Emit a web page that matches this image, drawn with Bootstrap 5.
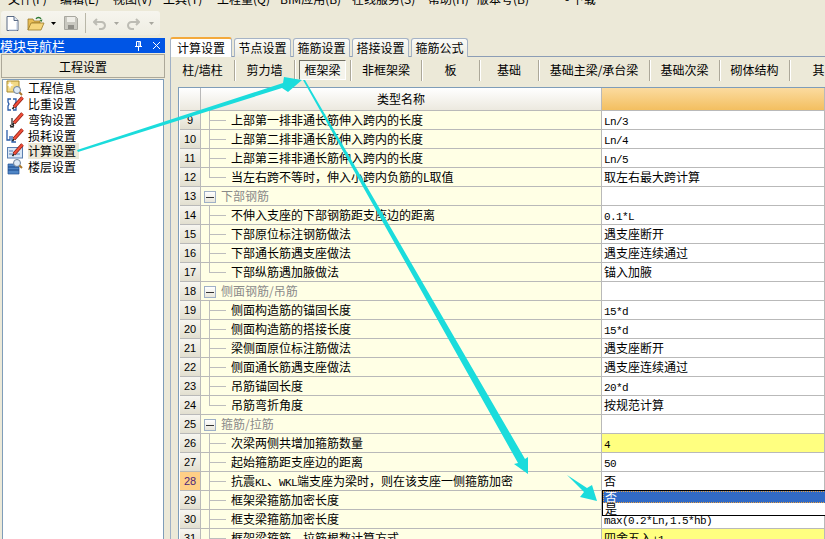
<!DOCTYPE html>
<html lang="zh-CN">
<head>
  <meta charset="UTF-8">
  <meta name="viewport" content="width=device-width, initial-scale=1.0">
  <title>计算设置</title>
  <link href="https://cdn.jsdelivr.net/npm/bootstrap@5.3.0/dist/css/bootstrap.min.css" rel="stylesheet">
  <style>
    body {
      width: 825px;
      height: 539px;
      overflow: hidden;
      position: relative;
      background-color: #ece9d8;
      color: #000;
      font-family: "Noto Sans CJK SC", "Liberation Sans", sans-serif;
      font-size: 12px;
      line-height: 18px;
    }
    .lat { font-family: "Liberation Mono", monospace; font-size: 11px; letter-spacing: -.6px; }

    /* 顶部菜单，只露出下半截 */
    .menu-strip { height: 8px; overflow: hidden; }
    .menu-strip .menu-inner { margin-top: -10px; height: 18px; white-space: nowrap; }
    .menu-item { flex: 0 0 auto; font-size: 12px; }
    .m1 { width: 60px; padding-left: 8px; }
    .m2 { width: 53px; }
    .m3 { width: 50px; }
    .m4 { width: 54px; }
    .m5 { width: 63px; }
    .m6 { width: 72px; }
    .m7 { width: 76px; }
    .m8 { width: 49px; }
    .m9 { width: 66px; }

    .tool-wrap { height: 30px; padding: 3px 0 0 1px; }
    .tool-strip {
      width: 159px;
      height: 24px;
      background: linear-gradient(#f6f5ee, #efede2);
      border-radius: 3px;
      padding-left: 5px;
    }
    .tool-sep { width: 1px; height: 20px; background: #b9b7a8; margin: 0 7px; }
    .tool-gap-s { margin-left: 6px; }
    .tool-gap-m { margin-left: 8px; }
    .tool-gap-l { margin-left: 9px; }

    .main-area { height: 501px; }
    .side-pane { width: 165px; flex: 0 0 165px; }
    .side-title {
      height: 15px;
      background: #0055e5;
      color: #fff;
      font-size: 13px;
      line-height: 15px;
      padding-right: 4px;
    }
    .title-btns { gap: 9px; }
    .side-btn {
      height: 24px;
      line-height: 19px;
      margin: 1px 0 0 1px;
      border: 1px solid #aca899;
      border-radius: 0;
      background: #ece9d8;
      color: #000;
      font-size: 12px;
      padding: 0;
      width: 164px;
    }
    .side-list {
      margin: 1px 0 0 2px;
      width: 162px;
      height: 462px;
      background: #fff;
      border: 1px solid #7f9db9;
      border-radius: 0;
    }
    .side-row {
      height: 16px;
      line-height: 16px;
      padding: 0 0 0 3px;
      border: 0;
      background: transparent;
      color: #000;
      font-size: 12px;
    }
    .side-row svg { flex: 0 0 18px; margin-right: 4px; }
    .side-row.active { background: transparent; color: #000; }
    .side-row.active span { background: #ece9d8; padding-right: 3px; }

    .work-pane { flex: 1 1 auto; margin-left: 5px; min-width: 0; margin-top: -1px; }
    .nav-tabs.page-tabs {
      height: 20px;
      border-bottom: 1px solid #8c9db5;
      gap: 2px;
      flex-wrap: nowrap;
    }
    .page-tabs .nav-link {
      height: 19px;
      margin-top: 1px;
      padding: 0;
      line-height: 18px;
      font-size: 12px;
      color: #000;
      background: linear-gradient(#fbfbf8, #eceade);
      border: 1px solid #a5b3c6;
      border-bottom: 0;
      border-radius: 3px 3px 0 0;
      width: 57px;
      text-align: center;
      white-space: nowrap;
    }
    .page-tabs .nav-link.active {
      height: 20px;
      margin-top: 0;
      width: 62px;
      color: #000;
      background: #fff;
      border: 1px solid #a5b3c6;
      border-top: 2px solid #f3a93c;
      border-bottom: 0;
    }
    .sub-bar {
      height: 30px;
      padding-top: 3px;
      border-left: 1px solid #9fb0c6;
      white-space: nowrap;
      overflow: hidden;
    }
    .sub-item {
      flex: 0 0 auto;
      height: 21px;
      line-height: 20px;
      text-align: center;
      font-size: 12px;
      border-right: 1px solid #aca899;
      box-shadow: 1px 0 0 #fff;
      padding: 0;
    }
    .sub-item.pressed span {
      display: block;
      margin: 0 4px;
      line-height: 18px;
      border: 1px solid;
      border-color: #716f64 #fff #fff #716f64;
      background: #f5f4ec;
      height: 20px;
    }

    .grid-wrap {
      height: 452px;
      border-left: 1px solid #9fb0c6;
      padding-left: 7px;
      overflow: hidden;
    }
    .grid-box {
      height: 100%;
      background: #fff;
      border: 1px solid #7f9db9;
      border-right: 0;
      border-bottom: 0;
      padding-left: 1px;
    }
    .col-num { width: 21px; }
    .col-name { width: 401px; }
    .table.cfg-grid {
      width: 645px;
      margin: 0;
      table-layout: fixed;
      border-collapse: separate;
      border-spacing: 0;
      --bs-table-bg: transparent;
      color: #000;
    }
    .table.cfg-grid > * > tr > * {
      padding: 0;
      height: 19px;
      line-height: 18px;
      font-weight: 400;
      font-size: 12px;
      border: 0;
      border-bottom: 1px solid #b9b9b9;
      border-right: 1px solid #b9b9b9;
      white-space: nowrap;
      overflow: hidden;
    }
    .cell-txt { display: block; height: 18px; overflow: hidden; }
    .table.cfg-grid > thead > tr > th {
      height: 23px;
      line-height: 22px;
      text-align: center;
      background: linear-gradient(#fff, #ece9df);
    }
    .table.cfg-grid > thead > tr > th.val-head { background: linear-gradient(#fbdb9f, #f3bf60); }
    .table.cfg-grid > tbody > tr > td.num {
      text-align: center;
      font-family: "Liberation Sans", sans-serif;
      font-size: 11px;
      background: linear-gradient(#f7f6f0, #e2dfd0);
    }
    .table.cfg-grid > tbody > tr > td.num.cur { background: #ffcf86; color: #4b1f7a; }
    .table.cfg-grid > tbody > tr > td.name {
      padding-left: 30px;
      background-color: #ffffe5;
      background-image: linear-gradient(#bdbdbd, #bdbdbd), linear-gradient(#bdbdbd, #bdbdbd);
      background-repeat: no-repeat;
      background-position: 8px 0, 8px 9px;
      background-size: 1px 100%, 17px 1px;
    }
    .table.cfg-grid > tbody > tr > td.name.tail { background-size: 1px 10px, 17px 1px; }
    .table.cfg-grid > tbody > tr > td.name.group {
      padding-left: 3px;
      background-image: none;
      color: #8a8a8a;
    }
    .fold-box {
      display: inline-block;
      width: 12px;
      height: 12px;
      margin-right: 5px;
      vertical-align: -2px;
      border: 1px solid #9fb0c6;
      background: linear-gradient(#333, #333) center / 8px 1px no-repeat, linear-gradient(#fff, #e8e6da);
    }
    .table.cfg-grid > tbody > tr > td.val { padding-left: 2px; background-color: #fff; }
    .table.cfg-grid > tbody > tr > td.val.hot { background-color: #ffff80; }

    /* 下拉框盖在表格上 */
    .combo-pop {
      position: absolute;
      left: 602px;
      top: 490px;
      width: 225px;
      height: 26px;
      background: #fff;
      border: 1px solid #000;
      line-height: 12px;
      z-index: 2;
      overflow: hidden;
    }
    .combo-pop .opt-on { height: 12px; background: #316ac5; color: #fff; outline: 1px dotted #e8a040; outline-offset: -1px; padding-left: 2px; }
    .combo-pop .opt { height: 12px; padding-left: 2px; }
    .arrow-layer { position: absolute; left: 0; top: 0; z-index: 3; pointer-events: none; }
  </style>
</head>
<body>
  <div class="menu-strip">
    <div class="menu-inner d-flex">
      <span class="menu-item m1">文件(F)</span>
      <span class="menu-item m2">编辑(E)</span>
      <span class="menu-item m3">视图(V)</span>
      <span class="menu-item m4">工具(T)</span>
      <span class="menu-item m5">工程量(Q)</span>
      <span class="menu-item m6">BIM应用(B)</span>
      <span class="menu-item m7">在线服务(S)</span>
      <span class="menu-item m8">帮助(H)</span>
      <span class="menu-item m9">版本号(B)</span>
      <svg width="14" height="8" viewBox="0 0 14 8"><path d="M1 0v3a4 4 0 0 0 4 4h4a4 4 0 0 0 4-4V0h-3v3H4V0z" fill="#2b8fe8"/></svg>
      <span class="menu-item ms-2">- 下载</span>
    </div>
  </div>

  <div class="tool-wrap">
    <div class="tool-strip d-flex align-items-center">
      <svg width="13" height="15" viewBox="0 0 13 15"><path d="M1 .5h7l4 4v10H1z" fill="#fff" stroke="#5a6a85"/><path d="M8 .5v4h4" fill="#dfe6f2" stroke="#5a6a85"/><path d="M11 6v8H3" fill="none" stroke="#b7c6de"/></svg>
      <svg class="tool-gap-m" width="18" height="15" viewBox="0 0 18 15"><path d="M1 3h5l1 2h6v2H5L1 14z" fill="#e8bd55" stroke="#9a7a28" stroke-width=".8"/><path d="M4 7h13l-3 7H1z" fill="#f6d67c" stroke="#9a7a28" stroke-width=".8"/><path d="M9 3c1-2 4-2 5 0" fill="none" stroke="#2f7a35" stroke-width="1.3"/><path d="M15.5 3.500l-3 .5 2 2z" fill="#2f7a35"/></svg>
      <svg class="tool-gap-s" width="5" height="3" viewBox="0 0 5 3"><path d="M0 0h5L2.500 3z" fill="#000"/></svg>
      <svg class="tool-gap-m" width="14" height="14" viewBox="0 0 14 14"><path d="M.5.500h11l2 2v11H.5z" fill="#c9c8c0" stroke="#a8a79f"/><path d="M3 1h8v5H3z" fill="#efeee8"/><path d="M4 9h6v4H4z" fill="#8f8e88"/></svg>
      <div class="tool-sep"></div>
      <svg width="13" height="13" viewBox="0 0 13 13"><path d="M4 2 1 5l3 3M1.500 5h7a3 3 0 0 1 0 7H6" fill="none" stroke="#bdbcb4" stroke-width="2"/></svg>
      <svg class="tool-gap-m" width="5" height="3" viewBox="0 0 5 3"><path d="M0 0h5L2.500 3z" fill="#a8a79f"/></svg>
      <svg class="tool-gap-m" width="13" height="13" viewBox="0 0 13 13"><path d="M9 2l3 3-3 3M11.500 5h-7a3 3 0 0 0 0 7H7" fill="none" stroke="#bdbcb4" stroke-width="2"/></svg>
      <svg class="tool-gap-l" width="5" height="3" viewBox="0 0 5 3"><path d="M0 0h5L2.500 3z" fill="#a8a79f"/></svg>
    </div>
  </div>

  <div class="main-area d-flex">
    <div class="side-pane">
      <div class="side-title d-flex align-items-center justify-content-between">
        <span>模块导航栏</span>
        <span class="d-flex align-items-center title-btns">
          <svg width="9" height="10" viewBox="0 0 9 10"><path d="M2.500.5h4v5h-4zM1 5.500h7M4.500 6v4M5 1v4" fill="none" stroke="#fff"/></svg>
          <svg width="9" height="9" viewBox="0 0 9 9"><path d="M1 1l7 7M8 1 1 8" stroke="#fff" fill="none"/></svg>
        </span>
      </div>
      <button type="button" class="btn side-btn d-block">工程设置</button>
      <div class="list-group side-list" id="sideList"></div>
    </div>

    <div class="work-pane">
      <ul class="nav nav-tabs page-tabs">
        <li class="nav-item"><a class="nav-link active" href="#">计算设置</a></li>
        <li class="nav-item"><a class="nav-link" href="#">节点设置</a></li>
        <li class="nav-item"><a class="nav-link" href="#">箍筋设置</a></li>
        <li class="nav-item"><a class="nav-link" href="#">搭接设置</a></li>
        <li class="nav-item"><a class="nav-link" href="#">箍筋公式</a></li>
      </ul>
      <div class="sub-bar d-flex" id="subBar"></div>
      <div class="grid-wrap">
        <div class="grid-box">
          <table class="table cfg-grid">
            <colgroup><col class="col-num"><col class="col-name"><col></colgroup>
            <thead>
              <tr><th></th><th>类型名称</th><th class="val-head"></th></tr>
            </thead>
            <tbody id="gridBody"></tbody>
          </table>
        </div>
      </div>
    </div>
  </div>

  <div class="combo-pop">
    <div class="opt-on">否</div>
    <div class="opt">是</div>
  </div>

  <svg class="arrow-layer" width="825" height="539" viewBox="0 0 825 539">
    <g fill="#1bdcdc">
      <polygon points="77,150 283,83 284,77 302,80 288,92 282,88 78,152"/>
      <polygon points="303,80 305,80 525,459 528,457 528,474 514,464 518,463"/>
      <polygon points="567,475 587,488 592,485 597,501 580,497 584,492"/>
    </g>
  </svg>

  <script src="https://cdn.jsdelivr.net/npm/bootstrap@5.3.0/dist/js/bootstrap.bundle.min.js"></script>
  <script>
    // 红色铅笔和放大镜是几个图标共用的
    const pen = '<path d="M8 11 16.500 1.500" stroke="#8c1c12" stroke-width="3.400"/><path d="M8 11 16.500 1.500" stroke="#f0503a" stroke-width="2"/><path d="M6.500 13 8 11" stroke="#222" stroke-width="1.500"/>';
    const lens = (x, y) => `<circle cx="${x}" cy="${y}" r="3.500" fill="#dfeaf5" stroke="#6a7f99"/><path d="M${x + 2.500} ${y + 2.500}l2.500 2.500" stroke="#a8762a" stroke-width="2"/>`;
    const sideItems = [
      ['工程信息', '<path d="M1 1h12v11H1z" fill="#f2d985" stroke="#a88a2e"/><path d="M4 1l1 3 3 1-3 1-1 3-1-3-2-1 2-1z" fill="#fff"/>' + lens(11, 10)],
      ['比重设置', '<path d="M5 3H2v3l1 2-1 2v4h3M7 3h3v3L9 8l1 2v4H7" fill="none" stroke="#2a5ca8" stroke-width="1.300"/>' + pen],
      ['弯钩设置', '<path d="M6 6v7M4 15h4M4 13l2 2 2-2" fill="none" stroke="#222" stroke-width="1.200"/>' + pen],
      ['损耗设置', '<path d="M1 2v10h3V8M6 8v6h4" fill="none" stroke="#2a5ca8" stroke-width="1.300"/>' + pen],
      ['计算设置', '<rect x="1.500" y="4.500" width="15" height="10.500" fill="#d8e6f5" stroke="#5a7fb0"/><path d="M3 8h4M3 11h11" stroke="#5a7fb0"/>' + pen],
      ['楼层设置', '<path d="M2 5h11v3H2zM2 8h11v3H2zM2 11h11v4H2z" fill="#4f86c6" stroke="#1f4f8f" stroke-width=".7"/>' + lens(11, 4)]
    ];
    document.getElementById('sideList').innerHTML = sideItems.map((it, i) => `
      <a href="#" class="list-group-item side-row d-flex align-items-center ${i === 4 ? 'active' : ''}">
        <svg width="18" height="16" viewBox="0 0 18 16" fill="none">${it[1]}</svg><span>${it[0]}</span>
      </a>`).join('');

    // 子页签宽度
    const subTabs = [
      ['柱/墙柱', 64], ['剪力墙', 60], ['框架梁', 56], ['非框架梁', 71], ['板', 58], ['基础', 59],
      ['基础主梁/承台梁', 111], ['基础次梁', 70], ['砌体结构', 70], ['其它', 70]
    ];
    document.getElementById('subBar').innerHTML = subTabs.map(t =>
      `<div class="sub-item ${t[0] === '框架梁' ? 'pressed' : ''}" style="width:${t[1]}px"><span>${t[0]}</span></div>`
    ).join('');

    const lat = s => `<span class="lat">${s}</span>`;
    // [行号, 名称, 值, 类型] g=分组 t=分组最后一行 h=黄底
    const rows = [
      [9, '上部第一排非通长筋伸入跨内的长度', lat('Ln/3')],
      [10, '上部第二排非通长筋伸入跨内的长度', lat('Ln/4')],
      [11, '上部第三排非通长筋伸入跨内的长度', lat('Ln/5')],
      [12, '当左右跨不等时，伸入小跨内负筋的L取值', '取左右最大跨计算', 't'],
      [13, '下部钢筋', '', 'g'],
      [14, '不伸入支座的下部钢筋距支座边的距离', lat('0.1*L')],
      [15, '下部原位标注钢筋做法', '遇支座断开'],
      [16, '下部通长筋遇支座做法', '遇支座连续通过'],
      [17, '下部纵筋遇加腋做法', '锚入加腋', 't'],
      [18, '侧面钢筋/吊筋', '', 'g'],
      [19, '侧面构造筋的锚固长度', lat('15*d')],
      [20, '侧面构造筋的搭接长度', lat('15*d')],
      [21, '梁侧面原位标注筋做法', '遇支座断开'],
      [22, '侧面通长筋遇支座做法', '遇支座连续通过'],
      [23, '吊筋锚固长度', lat('20*d')],
      [24, '吊筋弯折角度', '按规范计算', 't'],
      [25, '箍筋/拉筋', '', 'g'],
      [26, '次梁两侧共增加箍筋数量', lat('4'), 'h'],
      [27, '起始箍筋距支座边的距离', lat('50')],
      [28, `抗震${lat('KL')}、${lat('WKL')}端支座为梁时，则在该支座一侧箍筋加密`, '否'],
      [29, '框架梁箍筋加密长度', ''],
      [30, '框支梁箍筋加密长度', lat('max(0.2*Ln,1.5*hb)')],
      [31, '框架梁箍筋、拉筋根数计算方式', `四舍五入${lat('+1')}`, 'h']
    ];
    const txt = s => `<span class="cell-txt">${s}</span>`;
    document.getElementById('gridBody').innerHTML = rows.map(r => {
      const kind = r[3] || '';
      const nameCell = kind === 'g'
        ? `<td class="name group">${txt('<span class="fold-box"></span>' + r[1])}</td>`
        : `<td class="name ${kind === 't' ? 'tail' : ''}">${txt(r[1])}</td>`;
      return `<tr>
        <td class="num ${r[0] === 28 ? 'cur' : ''}">${txt(r[0])}</td>
        ${nameCell}
        <td class="val ${kind === 'h' ? 'hot' : ''}">${txt(r[2])}</td>
      </tr>`;
    }).join('');
  </script>
</body>
</html>
